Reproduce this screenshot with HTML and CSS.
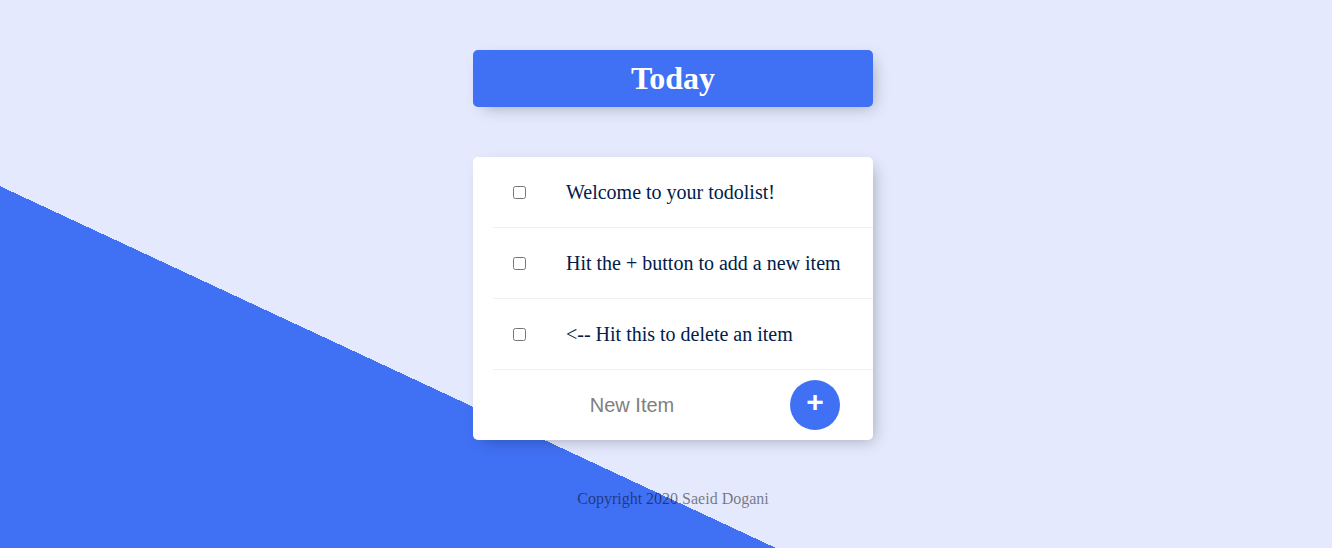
FILE: index.html
```html
<!DOCTYPE html>
<html lang="en">
<head>
<meta charset="utf-8">
<title>To Do List</title>
<link rel="stylesheet" href="styles.css">
</head>
<body>
  <div class="box heading">
    <h1 class="title">Today</h1>
  </div>
  <div class="box">
    <form class="item">
      <input class="check" type="checkbox">
      <p class="text">Welcome to your todolist!</p>
    </form>
    <form class="item">
      <input class="check" type="checkbox">
      <p class="text">Hit the + button to add a new item</p>
    </form>
    <form class="item">
      <input class="check" type="checkbox">
      <p class="text">&lt;-- Hit this to delete an item</p>
    </form>
    <form class="item">
      <input class="new-item" type="text" placeholder="New Item" autocomplete="off">
      <button class="add" type="button">+</button>
    </form>
  </div>
  <footer class="footer">Copyright 2020 Saeid Dogani</footer>
</body>
</html>
```
FILE: styles.css
```css
html {
  background-color: #E4E9FD;
  background-image: linear-gradient(25deg, #4070F4 50%, #E4E9FD 50%);
  background-size: 1346px 1000px;
  background-repeat: no-repeat;
  min-height: 1000px;
  font-family: "Liberation Serif", "Times New Roman", serif;
}

body {
  margin: 0;
  padding: 50px 0 0 14px;
}

.box {
  max-width: 400px;
  margin: 0 auto 50px;
  background: #ffffff;
  border-radius: 5px;
  box-shadow: 5px 5px 15px -5px rgba(0, 0, 0, 0.3);
}

.heading {
  background-color: #4070F4;
  text-align: center;
}

.title {
  color: #ffffff;
  padding: 10px;
  margin: 0;
  font-size: 32px;
  font-weight: bold;
}

.item {
  min-height: 70px;
  display: flex;
  align-items: center;
  border-bottom: 1px solid #F1F1F1;
  margin: 0 0 0 20px;
  text-align: center;
}

.item:last-child {
  border-bottom: 0;
}

.check {
  margin: 20px;
  width: 13px;
  height: 13px;
}

.text {
  margin: 0;
  padding: 20px;
  font-size: 20px;
  font-weight: 200;
  color: #00204a;
}

.new-item {
  box-sizing: border-box;
  width: 268px;
  height: 60px;
  border: none;
  padding: 1px 0 1px 10px;
  text-align: center;
  font-family: "Liberation Sans", Arial, sans-serif;
  font-size: 20px;
  font-weight: 200;
  background: transparent;
}

.new-item:focus {
  outline: none;
}

.new-item::placeholder {
  color: grey;
  opacity: 1;
}

.add {
  margin-left: 29px;
  height: 50px;
  width: 50px;
  border-radius: 50%;
  border: 0;
  background-color: #4070F4;
  color: #ffffff;
  font-family: "Liberation Sans", Arial, sans-serif;
  font-size: 30px;
  font-weight: bold;
  padding: 0 0 6px 0;
  line-height: 1;
}

.footer {
  color: rgba(0, 0, 0, 0.5);
  text-align: center;
  font-size: 16px;
}
```
